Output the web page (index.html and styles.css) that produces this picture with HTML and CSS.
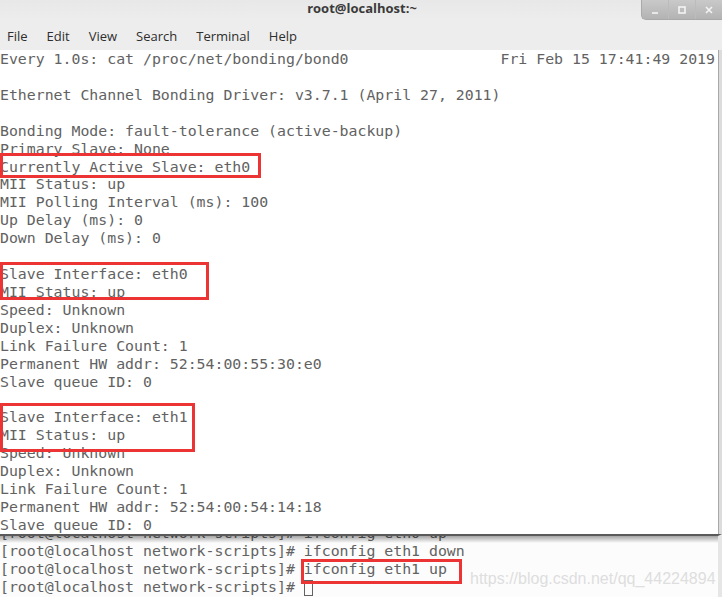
FILE: index.html
```html
<!DOCTYPE html>
<html lang="en">
<head>
    <meta charset="UTF-8">
    <title>root@localhost:~</title>
    <link rel="stylesheet" href="styles.css">
</head>
<body>
    <div class="window">
        <div class="titlebar">
            <span class="title">root@localhost:~</span>
            <div class="controls">
                <span class="ctl"><svg width="8" height="8" viewBox="0 0 8 8"><path d="M1 7h6" stroke="#f4f4f4" stroke-width="1.6"/></svg></span>
                <span class="ctl"><svg width="8" height="8" viewBox="0 0 8 8"><rect x="1" y="1" width="6" height="6" fill="none" stroke="#f4f4f4" stroke-width="1.6"/></svg></span>
                <span class="ctl"><svg width="8" height="8" viewBox="0 0 8 8"><path d="M1 1l6 6M7 1l-6 6" stroke="#f4f4f4" stroke-width="1.6"/></svg></span>
            </div>
        </div>
        <ul class="menubar">
            <li>File</li>
            <li>Edit</li>
            <li>View</li>
            <li>Search</li>
            <li>Terminal</li>
            <li>Help</li>
        </ul>

        <div class="watch">
            <pre class="term">Every 1.0s: cat /proc/net/bonding/bond0                 Fri Feb 15 17:41:49 2019

Ethernet Channel Bonding Driver: v3.7.1 (April 27, 2011)

Bonding Mode: fault-tolerance (active-backup)
Primary Slave: None
Currently Active Slave: eth0
MII Status: up
MII Polling Interval (ms): 100
Up Delay (ms): 0
Down Delay (ms): 0

Slave Interface: eth0
MII Status: up
Speed: Unknown
Duplex: Unknown
Link Failure Count: 1
Permanent HW addr: 52:54:00:55:30:e0
Slave queue ID: 0

Slave Interface: eth1
MII Status: up
Speed: Unknown
Duplex: Unknown
Link Failure Count: 1
Permanent HW addr: 52:54:00:54:14:18
Slave queue ID: 0</pre>
            <div class="scrollbar"></div>
        </div>

        <div class="shell">
            <pre class="term">[root@localhost network-scripts]# ifconfig eth0 up
[root@localhost network-scripts]# ifconfig eth1 down
[root@localhost network-scripts]# ifconfig eth1 up
[root@localhost network-scripts]# <span class="cursor"></span></pre>
        </div>
    </div>

    <div class="mark mark-active"></div>
    <div class="mark mark-eth0"></div>
    <div class="mark mark-eth1"></div>
    <div class="mark mark-cmd"></div>
    <div class="watermark">https://blog.csdn.net/qq_44224894</div>
</body>
</html>
```

FILE: styles.css
```css
body {
    margin: 0;
    width: 722px;
    height: 597px;
    overflow: hidden;
    background: #ffffff;
    position: relative;
}
.window {
    width: 722px;
    height: 597px;
    display: flex;
    flex-direction: column;
    background: #ededed;
}
.titlebar {
    height: 20px;
    position: relative;
    display: flex;
    justify-content: center;
    align-items: center;
    background: linear-gradient(#e8e8e8, #ededed);
}
.title {
    font-family: "Open Sans", "DejaVu Sans", sans-serif;
    font-weight: bold;
    font-size: 13px;
    color: #3a3a3a;
    margin-left: 2px;
    margin-top: -4px;
}
.controls {
    position: absolute;
    top: 0;
    right: 0;
    height: 19px;
    display: flex;
    background: linear-gradient(#c9c9c9, #b3b3b3);
    border-bottom-left-radius: 5px;
    border-left: 1px solid #a9a9a9;
    border-bottom: 1px solid #a9a9a9;
}
.ctl {
    width: 26px;
    display: flex;
    align-items: center;
    justify-content: center;
    border-left: 1px solid #bcbcbc;
}
.ctl:first-child {
    border-left: none;
}
.menubar {
    height: 30px;
    margin: 0;
    padding: 0 0 0 7px;
    list-style: none;
    display: flex;
    align-items: center;
    gap: 19px;
    font-family: "Open Sans", "DejaVu Sans", sans-serif;
    font-size: 13px;
    color: #2e2e2e;
}
.menubar li {
    padding-top: 2px;
}
.term {
    margin: 0;
    font-family: "DejaVu Sans Mono", monospace;
    font-size: 14.85px;
    line-height: 17.92px;
    color: #626262;
    white-space: pre;
}
.watch {
    height: 484px;
    background: #ffffff;
    display: flex;
    overflow: hidden;
}
.watch .term {
    flex: 1;
    padding-top: 1px;
}
.scrollbar {
    width: 3px;
    background: #dcdcdc;
    border-left: 1px solid #a8a8a8;
}
.shell {
    flex: 1;
    overflow: hidden;
    position: relative;
    background: #fcfcfc;
    border-top: 2px solid #5a5a5a;
    border-right: 4px solid #e6e6e6;
}
.shell::before {
    content: "";
    position: absolute;
    top: 0;
    left: 0;
    right: 0;
    height: 7px;
    background: linear-gradient(rgba(0, 0, 0, 0.35), rgba(0, 0, 0, 0));
}
.shell .term {
    margin-top: -11px;
}
.cursor {
    display: inline-block;
    width: 9px;
    height: 16px;
    border: 1px solid #626262;
    box-sizing: border-box;
    vertical-align: -4px;
}
.mark {
    position: absolute;
    border: 3px solid #ec3434;
    box-sizing: border-box;
}
.mark-active {
    left: 0;
    top: 153px;
    width: 261px;
    height: 25px;
}
.mark-eth0 {
    left: 0;
    top: 262px;
    width: 209px;
    height: 38px;
}
.mark-eth1 {
    left: 0;
    top: 403px;
    width: 195px;
    height: 49px;
}
.mark-cmd {
    left: 301px;
    top: 559px;
    width: 161px;
    height: 25px;
}
.watermark {
    position: absolute;
    left: 470px;
    top: 570px;
    font-family: "Liberation Sans", Arial, sans-serif;
    font-size: 16px;
    color: #dedede;
}
```
